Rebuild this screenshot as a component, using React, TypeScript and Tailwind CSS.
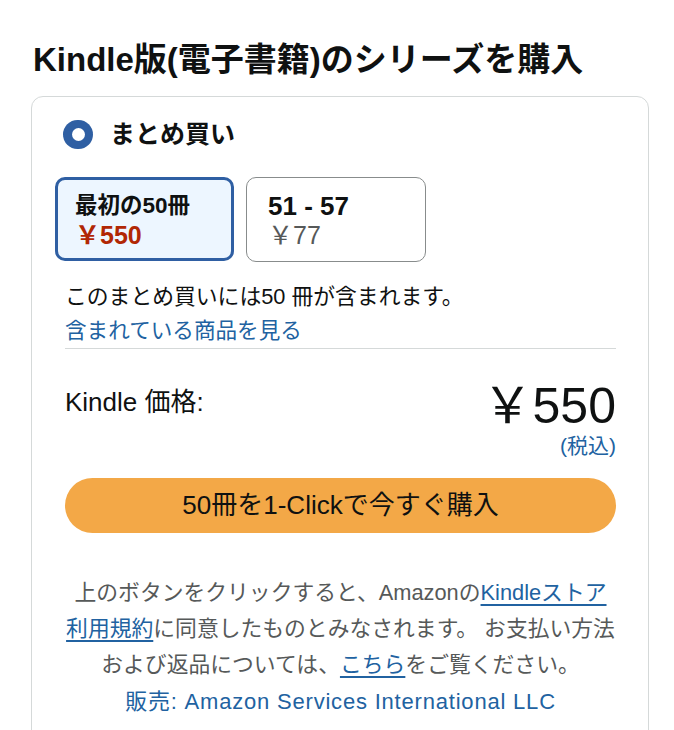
import React from "react"

const font = { fontFamily: '"Liberation Sans", "Noto Sans CJK JP", sans-serif' }

export default function App() {
  return (
    <div className="bg-white min-h-screen text-[#0f1111]" style={font}>
      <div className="pl-[31px] pr-[25px] pt-[40px]">
        <h1 className="pl-[2px] text-[33px] leading-[40px] font-bold">
          Kindle版(電子書籍)のシリーズを購入
        </h1>

        {/* card */}
        <div className="mt-[16px] border border-[#d5d9d9] rounded-[12px] pl-[33px] pr-[32px] pt-[22px] pb-[40px]">
          <div className="flex items-center gap-[17px] h-[30px] -ml-[2px]">
            <div className="w-[30px] h-[29px] rounded-full bg-[#2f5fa3] flex items-center justify-center">
              <div className="w-[13px] h-[13px] rounded-full bg-white" />
            </div>
            <span className="text-[25px] font-bold leading-[30px]">まとめ買い</span>
          </div>

          {/* options */}
          <div className="flex gap-[12px] mt-[28px] -ml-[10px]">
            <div className="w-[179px] h-[84px] rounded-[10px] border-[3px] border-[#2f5fa3] bg-[#edf6ff] pl-[17px] pt-[12px]">
              <div className="text-[22.5px] font-bold leading-[28px]">最初の50冊</div>
              <div className="text-[25px] font-bold leading-[30px] text-[#b12704]">￥550</div>
            </div>
            <div className="w-[180px] h-[85px] rounded-[10px] border border-[#888c8c] bg-white pl-[21px] pt-[14px]">
              <div className="text-[26px] font-bold leading-[28px]">51 - 57</div>
              <div className="text-[25px] leading-[30px] text-[#565959]">￥77</div>
            </div>
          </div>

          <div className="mt-[18px] text-[21.8px] leading-[34px]">
            このまとめ買いには50 冊が含まれます。
          </div>
          <div className="text-[21.6px] leading-[34px] text-[#2162a1] border-b border-[#d5d9d9]">
            含まれている商品を見る
          </div>

          {/* price */}
          <div className="flex justify-between items-start mt-[32px]">
            <span className="text-[26px] leading-[32px] mt-[5px]">Kindle 価格:</span>
            <span className="text-[50px] leading-[50px]">￥550</span>
          </div>
          <div className="text-right text-[21px] leading-[26px] text-[#2162a1] mt-[2px]">(税込)</div>

          <button className="mt-[19px] w-full h-[55px] rounded-full bg-[#f3a847] text-[26px] text-[#0f1111]">
            50冊を1-Clickで今すぐ購入
          </button>

          {/* terms */}
          <div className="mt-[42px] -mx-[14px] text-center text-[21.8px] leading-[36px] text-[#565959] whitespace-nowrap">
            上のボタンをクリックすると、Amazonの
            <a className="text-[#2162a1] underline underline-offset-[4px]">
              Kindleストア
              <br />
              利用規約
            </a>
            に同意したものとみなされます。 お支払い方法
            <br />
            および返品については、
            <a className="text-[#2162a1] underline underline-offset-[4px]">こちら</a>
            をご覧ください。
          </div>
          <div className="text-center text-[22px] tracking-[0.8px] leading-[38px] text-[#2162a1] whitespace-nowrap">
            販売: Amazon Services International LLC
          </div>
        </div>
      </div>
    </div>
  )
}
